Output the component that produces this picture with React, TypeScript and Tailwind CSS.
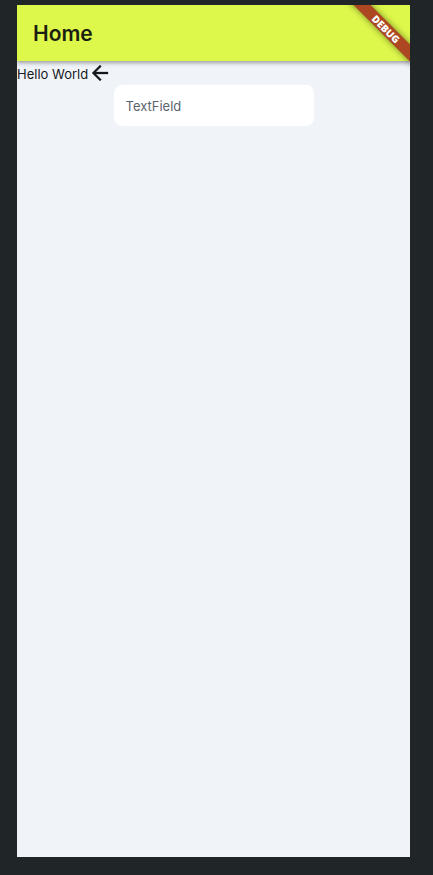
const ArrowBackIcon = () => (
  <svg
    viewBox="0 0 24 24"
    className="size-6 shrink-0"
    fill="currentColor"
    stroke="currentColor"
    strokeWidth="0.3"
    aria-hidden="true"
  >
    <path d="M20 11H7.83l5.59-5.59L12 4l-8 8 8 8 1.41-1.41L7.83 13H20v-2z" />
  </svg>
);

const DebugBanner = () => (
  <div className="pointer-events-none absolute top-0 right-0 z-10 flex size-12 items-center justify-center">
    <div className="flex h-3 w-28 shrink-0 rotate-45 items-center justify-center bg-[#ad4722] shadow-[0_0_6px_rgba(0,0,0,0.5)]">
      <span className="font-['Open_Sans',sans-serif] text-[10px] leading-3 font-extrabold text-white">
        DEBUG
      </span>
    </div>
  </div>
);

const AppBar = ({ title }: { title: string }) => (
  <header className="flex h-14 items-center bg-[#def74b] px-4 shadow-[0_2px_4px_rgba(0,0,0,0.35)]">
    <h1 className="pt-px text-[21px] leading-7 font-semibold text-[#1a1f10]">{title}</h1>
  </header>
);

export default function App() {
  return (
    <div className="flex min-h-screen flex-col bg-[#202528] pt-[5px] pr-[23px] pb-[18px] pl-[17px] font-['Inter',sans-serif]">
      <div className="relative flex flex-1 flex-col overflow-hidden bg-[#f0f3f8]">
        <AppBar title="Home" />
        <DebugBanner />
        <main className="flex flex-col">
          <div className="flex h-6 items-center text-[#16191d]">
            <p className="pt-0.5 text-[13px] leading-5">Hello World</p>
            <ArrowBackIcon />
          </div>
          <input
            type="text"
            aria-label="TextField"
            placeholder="TextField"
            className="h-[41px] w-[200px] self-center rounded-lg bg-white px-3 text-[13px] text-[#1a1c1e] outline-none placeholder:text-[#5c646e]"
          />
        </main>
      </div>
    </div>
  );
}
